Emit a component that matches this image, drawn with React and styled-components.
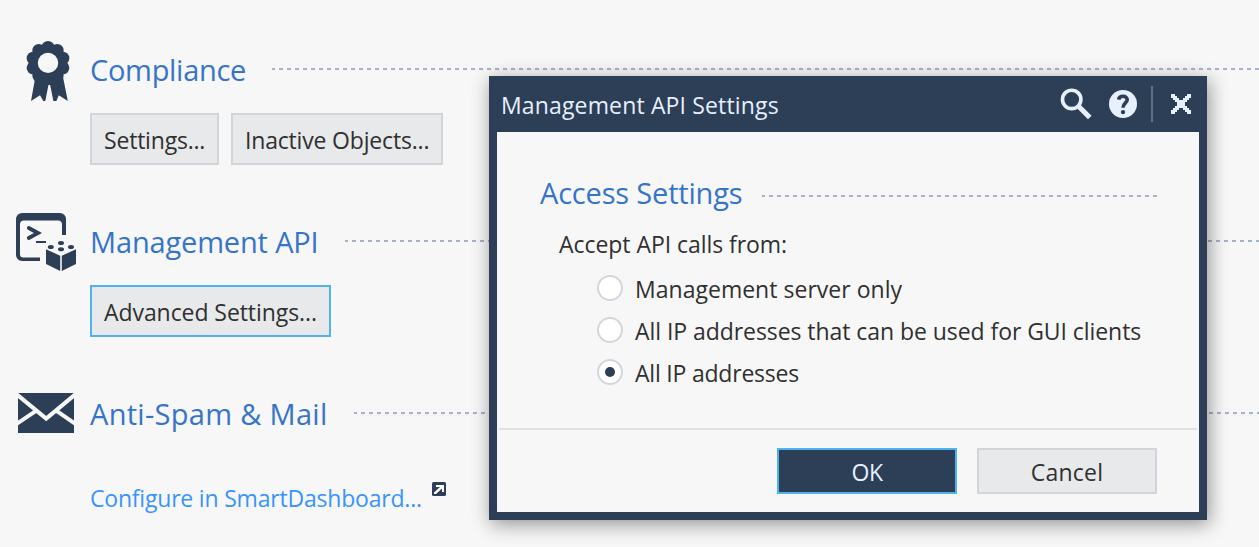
import React from "react";
import styled, { createGlobalStyle, css } from "styled-components";

const navy = "#2d3e57";
const ice = "#e6f0ff";

const GlobalStyle = createGlobalStyle`
  body { margin: 0; background: #f7f7f7; }
  * { box-sizing: border-box; }
`;

const Page = styled.main`
  position: relative;
  width: 1259px;
  height: 547px;
  padding-top: 40px;
  overflow: hidden;
  background: #f7f7f7;
  color: #303030;
  font-family: "Open Sans", "Noto Sans", sans-serif;
  font-size: 23px;
  line-height: 40px;
  white-space: nowrap;
`;

const Section = styled.section`
  display: flex;
  height: 172px;
`;

const SectionIcon = styled.svg`
  flex: none;
  width: 90px;
  height: 64px;
  fill: ${navy};
`;

const SectionBody = styled.div`
  flex: 1;
  min-width: 0;
  padding-top: 10px;
`;

const TitleRow = styled.div`
  display: flex;
  height: 40px;
`;

const Heading = styled.h2`
  flex: none;
  width: ${(p) => p.$width}px;
  margin: 0;
  color: #3674c8;
  font-size: 29px;
  font-weight: 400;
  letter-spacing: ${(p) => p.$spacing}px;
`;

const Rule = styled.div`
  flex: 1;
  height: 2px;
  margin-top: ${(p) => p.$top || 18}px;
  background: repeating-linear-gradient(
    to right,
    #a8b2c7 0 3px,
    transparent 3px 7px,
    #a8b2c7 7px 8px
  );
`;

const ButtonRow = styled.div`
  display: flex;
  gap: 12px;
  margin-top: 23px;
`;

const Button = styled.button`
  width: ${(p) => p.$width}px;
  height: 52px;
  padding: 2px 0 0 12px;
  border: 2px solid ${(p) => (p.$active ? "#4fb3f2" : "#d1d5da")};
  background: #e7e9eb;
  color: inherit;
  font: inherit;
  line-height: 46px;
  letter-spacing: ${(p) => p.$spacing || 0}px;
  text-align: left;
`;

const DialogButton = styled(Button)`
  width: 180px;
  height: 46px;
  padding: 2px 0 0;
  line-height: 40px;
  text-align: center;
  ${(p) =>
    p.$primary &&
    css`
      border-color: #4fb3f2;
      background: ${navy};
      color: ${ice};
    `}
`;

const LinkRow = styled.div`
  display: flex;
  margin-top: 44px;
`;

const Link = styled.a`
  width: 342px;
  color: #3794ff;
  letter-spacing: -0.2px;
`;

const ExternalIcon = styled.svg`
  width: 14px;
  height: 14px;
  margin-top: 4px;
`;

const Dialog = styled.div`
  position: absolute;
  left: 489px;
  top: 76px;
  display: flex;
  flex-direction: column;
  width: 718px;
  height: 444px;
  padding: 0 8px 8px;
  background: ${navy};
  box-shadow: 2px 4px 18px rgba(0, 0, 0, 0.42);
`;

const DialogHeader = styled.header`
  display: flex;
  align-items: center;
  height: 56px;
  padding: 0 8px 0 4px;
  color: ${ice};
`;

const DialogTitle = styled.h1`
  flex: 1;
  margin: 0;
  padding-top: 2px;
  font-size: 23px;
  font-weight: 400;
  letter-spacing: 0.15px;
`;

const HeaderIcon = styled.svg`
  flex: none;
  width: ${(p) => p.$size}px;
  height: ${(p) => p.$size}px;
  margin-right: ${(p) => p.$gap || 0}px;
`;

const HeaderDivider = styled.span`
  width: 2px;
  height: 36px;
  margin-right: 18px;
  background: #66717f;
`;

const DialogBody = styled.div`
  flex: 1;
  padding-top: 41px;
  background: #f7f7f7;
`;

const Settings = styled.div`
  height: 255px;
  padding: 0 42px 0 43px;
`;

const Prompt = styled.p`
  margin: 11px 0 0 19px;
  letter-spacing: -0.05px;
`;

const Options = styled.div`
  margin: 3px 0 0 57px;
`;

const Option = styled.label`
  display: flex;
  align-items: center;
  gap: 12px;
  height: 42px;
  letter-spacing: ${(p) => p.$spacing}px;
`;

const Radio = styled.span`
  display: grid;
  place-items: center;
  width: 26px;
  height: 26px;
  border: 2px solid #d3d7dc;
  border-radius: 50%;
  background: #fff;
`;

const RadioDot = styled.span`
  width: 10px;
  height: 10px;
  border-radius: 50%;
  background: ${navy};
`;

const OptionText = styled.span`
  padding-top: 2px;
`;

const DialogFooter = styled.footer`
  display: flex;
  justify-content: flex-end;
  gap: 20px;
  margin: 0 2px;
  padding: 18px 40px 0 0;
  border-top: 2px solid #dfe3e8;
`;

const scallops = Array.from({ length: 10 }, (_, i) => {
  const a = (i * Math.PI) / 5;
  return [48 + 15.6 * Math.sin(a), 63 - 15.6 * Math.cos(a)];
});

function RibbonIcon() {
  return (
    <SectionIcon viewBox="0 40 90 64">
      <path d="M35.5 76 31 101 40 95.2 43.3 101H45.3L48.6 84.3H50L53.4 101H56.4L58.8 95.2 67.8 101 62.8 76Z" />
      {scallops.map(([x, y], i) => (
        <circle key={i} cx={x} cy={y} r="6.5" />
      ))}
      <circle cx="48" cy="63" r="19" />
      <circle cx="48" cy="62.9" r="10.2" fill="#f7f7f7" />
    </SectionIcon>
  );
}

function ApiIcon() {
  return (
    <SectionIcon viewBox="0 212 90 64">
      <path d="M66 235V219a6 6 0 0 0-6-6H22a6 6 0 0 0-6 6v36a6 6 0 0 0 6 6H40V257.6H23.5a3.5 3.5 0 0 1-3.5-3.5V224.5a4 4 0 0 1 4-4H58a4 4 0 0 1 4 4V235Z" />
      <path d="M28.8 228 38 233 28.8 238" fill="none" stroke={navy} strokeWidth="3.8" strokeLinecap="round" />
      <path d="M36 241H46V243H36Z" />
      <path d="M46 249.3 60.2 255.7V271L46 264ZM76 249.3 61.8 255.7V271L76 264Z" />
      <ellipse cx="50.8" cy="247.1" rx="3" ry="2" />
      <ellipse cx="61" cy="243.1" rx="3" ry="2" />
      <ellipse cx="71" cy="247.1" rx="3" ry="2" />
      <ellipse cx="61" cy="249.2" rx="3" ry="2" />
    </SectionIcon>
  );
}

function MailIcon() {
  return (
    <SectionIcon viewBox="0 384 90 64">
      <path d="M18 393H74V433H18Z" />
      <path
        d="M17 394.6 46.2 418.6 75 394.6M17 423.7 36 410.8M75 423.7 56.5 410.8"
        fill="none"
        stroke="#f7f7f7"
        strokeWidth="4"
      />
    </SectionIcon>
  );
}

export default function App() {
  return (
    <>
      <GlobalStyle />
      <Page>
        <Section>
          <RibbonIcon />
          <SectionBody>
            <TitleRow>
              <Heading $width={182} $spacing={-0.3}>Compliance</Heading>
              <Rule />
            </TitleRow>
            <ButtonRow>
              <Button $width={129} $spacing={-0.2}>Settings...</Button>
              <Button $width={212} $spacing={-0.18}>Inactive Objects...</Button>
            </ButtonRow>
          </SectionBody>
        </Section>
        <Section>
          <ApiIcon />
          <SectionBody>
            <TitleRow>
              <Heading $width={255} $spacing={-0.16}>Management API</Heading>
              <Rule />
            </TitleRow>
            <ButtonRow>
              <Button $width={241} $spacing={-0.07} $active>Advanced Settings...</Button>
            </ButtonRow>
          </SectionBody>
        </Section>
        <Section>
          <MailIcon />
          <SectionBody>
            <TitleRow>
              <Heading $width={264} $spacing={0.3}>Anti-Spam &amp; Mail</Heading>
              <Rule />
            </TitleRow>
            <LinkRow>
              <Link>Configure in SmartDashboard...</Link>
              <ExternalIcon viewBox="0 0 14 14">
                <rect width="14" height="14" rx="1.6" fill={navy} />
                <path d="M4 3H12V10H10V6.6L4 12H2V10.4L8 5H4Z" fill="#fff" />
              </ExternalIcon>
            </LinkRow>
          </SectionBody>
        </Section>

        <Dialog role="dialog">
          <DialogHeader>
            <DialogTitle>Management API Settings</DialogTitle>
            <HeaderIcon $size={32} $gap={17} viewBox="0 0 32 32">
              <circle cx="11.7" cy="11.4" r="9.2" fill="none" stroke={ice} strokeWidth="3.6" />
              <path d="M18 17.8 29.8 29.6" stroke={ice} strokeWidth="5" />
            </HeaderIcon>
            <HeaderIcon $size={28} $gap={14} viewBox="0 0 28 28">
              <circle cx="14" cy="14" r="14" fill={ice} />
              <path
                d="M9.6 9.6C10 7.2 11.8 6.3 14 6.3C16.6 6.3 18.2 7.8 18.2 9.8C18.2 13 14 12.8 14 17.8"
                fill="none"
                stroke={navy}
                strokeWidth="3.6"
              />
              <circle cx="14" cy="22.1" r="2.2" fill={navy} />
            </HeaderIcon>
            <HeaderDivider />
            <HeaderIcon $size={20} viewBox="0 0 10 10" shapeRendering="crispEdges">
              <path
                fill={ice}
                d="M0 0H2V1H3V2H4V3H6V2H7V1H8V0H10V2H9V3H8V4H7V6H8V7H9V8H10V10H8V9H7V8H6V7H4V8H3V9H2V10H0V8H1V7H2V6H3V4H2V3H1V2H0Z"
              />
            </HeaderIcon>
          </DialogHeader>
          <DialogBody>
            <Settings>
              <TitleRow>
                <Heading $width={222} $spacing={-0.18}>Access Settings</Heading>
                <Rule $top={22} />
              </TitleRow>
              <Prompt>Accept API calls from:</Prompt>
              <Options>
                <Option $spacing={0.02}>
                  <Radio />
                  <OptionText>Management server only</OptionText>
                </Option>
                <Option $spacing={-0.06}>
                  <Radio />
                  <OptionText>All IP addresses that can be used for GUI clients</OptionText>
                </Option>
                <Option $spacing={-0.21}>
                  <Radio><RadioDot /></Radio>
                  <OptionText>All IP addresses</OptionText>
                </Option>
              </Options>
            </Settings>
            <DialogFooter>
              <DialogButton $primary $spacing={-0.4}>OK</DialogButton>
              <DialogButton $spacing={0.2}>Cancel</DialogButton>
            </DialogFooter>
          </DialogBody>
        </Dialog>
      </Page>
    </>
  );
}
